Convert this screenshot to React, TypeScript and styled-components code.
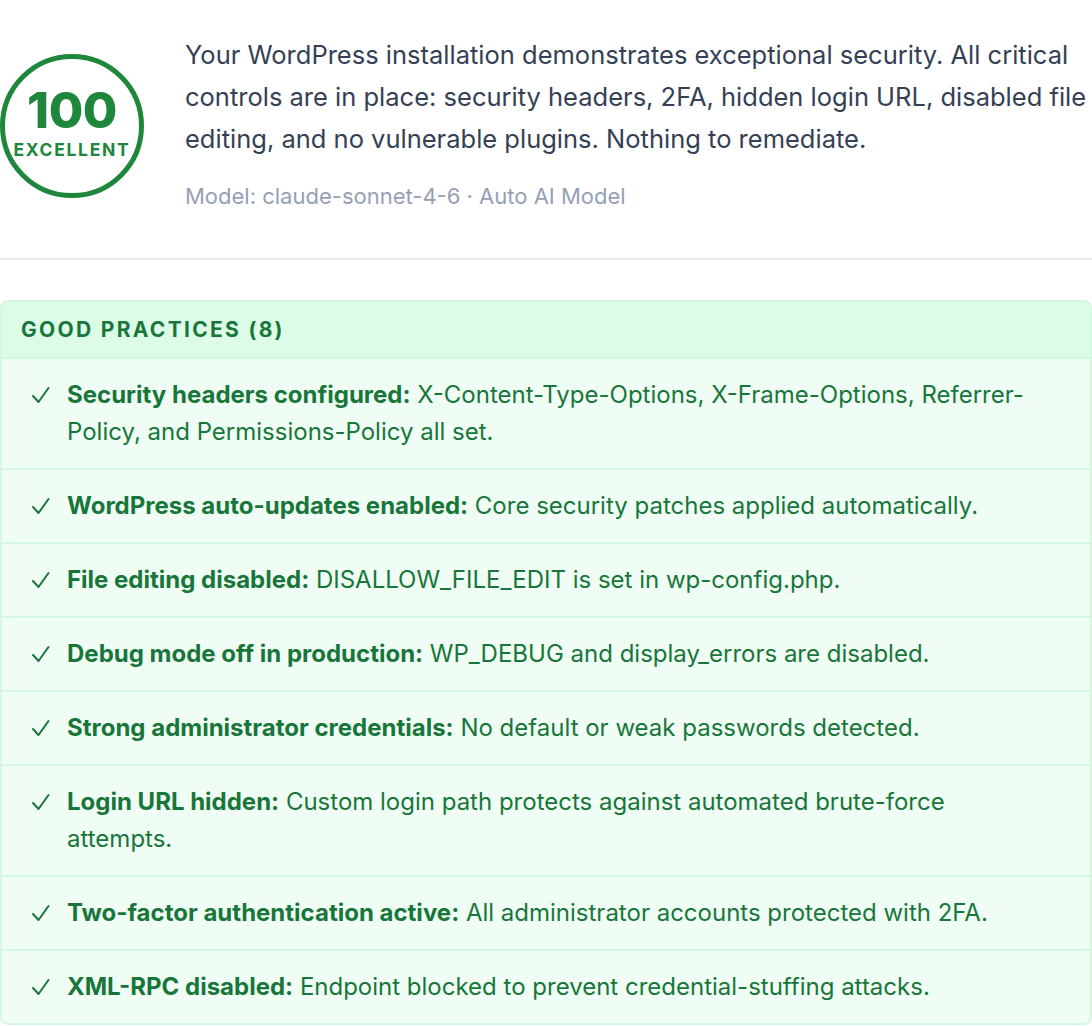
import styled, { createGlobalStyle } from 'styled-components';

const GlobalStyle = createGlobalStyle`
  body {
    margin: 0;
    background: #ffffff;
    font-family: Inter, "Noto Sans", sans-serif;
  }
`;

const Page = styled.div`
  width: 1092px;
`;

const Summary = styled.section`
  display: flex;
  align-items: flex-start;
  gap: 41px;
  padding: 34px 0 47px 0;
  border-bottom: 2px solid #e5e8ee;
`;

const ScoreRing = styled.div`
  flex: none;
  width: 144px;
  height: 144px;
  margin-top: 20px;
  padding-bottom: 8px;
  box-sizing: border-box;
  border: 5px solid #1e873b;
  border-radius: 50%;
  display: flex;
  flex-direction: column;
  align-items: center;
  justify-content: center;
  color: #1e873b;
`;

const ScoreValue = styled.div`
  font-size: 50px;
  font-weight: 800;
  line-height: 50px;
  letter-spacing: -0.5px;
`;

const ScoreLabel = styled.div`
  font-size: 17.5px;
  font-weight: 700;
  letter-spacing: 1.7px;
  margin-top: 4px;
`;

const SummaryText = styled.div`
  flex: 1;
  min-width: 0;
`;

const Verdict = styled.p`
  margin: 0;
  font-size: 25.5px;
  line-height: 42px;
  color: #344155;
`;

const ModelNote = styled.p`
  margin: 21px 0 0 0;
  font-size: 22px;
  line-height: 30px;
  color: #94a0b4;
`;

const Card = styled.section`
  margin-top: 40px;
  border: 2px solid #d3f7e3;
  border-radius: 8px;
  overflow: hidden;
  background: #effdf4;
`;

const CardHeader = styled.h3`
  margin: 0;
  padding: 0 19px;
  height: 55px;
  display: flex;
  align-items: center;
  background: #dcfce7;
  color: #18763a;
  font-size: 21px;
  font-weight: 700;
  letter-spacing: 2.3px;
  text-transform: uppercase;
  border-bottom: 2px solid #d3f7e3;
`;

const List = styled.ul`
  margin: 0;
  padding: 0;
  list-style: none;
`;

const Item = styled.li`
  display: flex;
  gap: 17px;
  padding: 17px 44px 18px 29px;
  font-size: 24px;
  line-height: 37px;
  color: #18763a;
  border-top: 2px solid #d3f7e3;

  &:first-child {
    border-top: none;
  }
`;

const Tick = styled.svg`
  flex: none;
  width: 19px;
  height: 37px;
`;

const ItemText = styled.span`
  b {
    font-weight: 700;
  }
`;

const practices = [
  {
    title: 'Security headers configured:',
    text: 'X-Content-Type-Options, X-Frame-Options, Referrer-Policy, and Permissions-Policy all set.',
  },
  {
    title: 'WordPress auto-updates enabled:',
    text: 'Core security patches applied automatically.',
  },
  {
    title: 'File editing disabled:',
    text: 'DISALLOW_FILE_EDIT is set in wp-config.php.',
  },
  {
    title: 'Debug mode off in production:',
    text: 'WP_DEBUG and display_errors are disabled.',
  },
  {
    title: 'Strong administrator credentials:',
    text: 'No default or weak passwords detected.',
  },
  {
    title: 'Login URL hidden:',
    text: 'Custom login path protects against automated brute-force attempts.',
  },
  {
    title: 'Two-factor authentication active:',
    text: 'All administrator accounts protected with 2FA.',
  },
  {
    title: 'XML-RPC disabled:',
    text: 'Endpoint blocked to prevent credential-stuffing attacks.',
  },
];

export default function App() {
  return (
    <>
      <GlobalStyle />
      <Page>
        <Summary>
          <ScoreRing>
            <ScoreValue>100</ScoreValue>
            <ScoreLabel>EXCELLENT</ScoreLabel>
          </ScoreRing>
          <SummaryText>
            <Verdict>
              Your WordPress installation demonstrates exceptional security. All critical
              controls are in place: security headers, 2FA, hidden login URL, disabled file
              editing, and no vulnerable plugins. Nothing to remediate.
            </Verdict>
            <ModelNote>Model: claude-sonnet-4-6 · Auto AI Model</ModelNote>
          </SummaryText>
        </Summary>
        <Card>
          <CardHeader>Good Practices ({practices.length})</CardHeader>
          <List>
            {practices.map((p) => (
              <Item key={p.title}>
                <Tick viewBox="0 0 19 37" fill="none">
                  <polyline
                    points="2,20 7.5,26 17.5,12"
                    stroke="currentColor"
                    strokeWidth="2"
                    strokeLinecap="round"
                    strokeLinejoin="round"
                  />
                </Tick>
                <ItemText>
                  <b>{p.title}</b> {p.text}
                </ItemText>
              </Item>
            ))}
          </List>
        </Card>
      </Page>
    </>
  );
}
